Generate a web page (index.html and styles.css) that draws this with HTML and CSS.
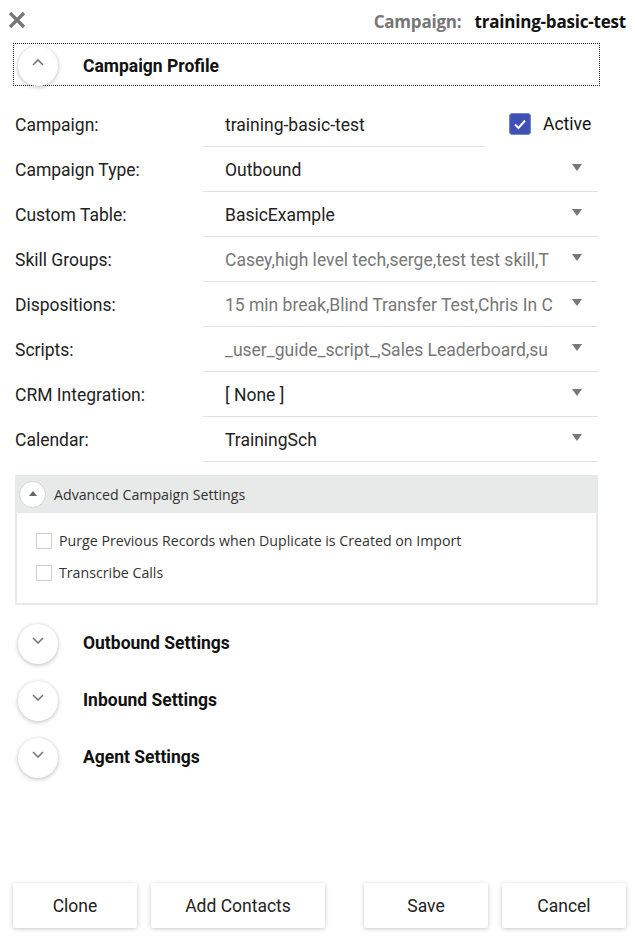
FILE: index.html
```html
<!DOCTYPE html>
<html>
<head>
<meta charset="utf-8">
<link rel="stylesheet" href="styles.css">
</head>
<body>
<div class="page">
  <div class="topbar">
    <svg class="close" width="18" height="18" viewBox="0 0 18 18"><path d="M2 2 L16 16 M16 2 L2 16" stroke="#777" stroke-width="3.2" stroke-linecap="butt"/></svg>
    <div class="camp-title"><span class="ct-label">Campaign:</span><span class="ct-value">training-basic-test</span></div>
  </div>

  <div class="section-head profile">
    <div class="circle-btn"><svg width="14" height="8" viewBox="0 0 14 8"><path d="M2 7 L7 2 L12 7" fill="none" stroke="#777" stroke-width="1.6"/></svg></div>
    <span class="section-title">Campaign Profile</span>
  </div>

  <div class="form">
    <div class="row">
      <div class="label">Campaign:</div>
      <div class="field-wrap">
        <div class="field short"><span class="val">training-basic-test</span></div>
        <label class="active"><span class="cb-on"><svg width="16" height="16" viewBox="0 0 16 16"><path d="M3 8.5 L6.5 12 L13 4.5" fill="none" stroke="#fff" stroke-width="2"/></svg></span>Active</label>
      </div>
    </div>
    <div class="row">
      <div class="label">Campaign Type:</div>
      <div class="field"><span class="val">Outbound</span><span class="caret"></span></div>
    </div>
    <div class="row">
      <div class="label">Custom Table:</div>
      <div class="field"><span class="val">BasicExample</span><span class="caret"></span></div>
    </div>
    <div class="row">
      <div class="label">Skill Groups:</div>
      <div class="field"><span class="val multi">Casey,high level tech,serge,test test skill,T</span><span class="caret"></span></div>
    </div>
    <div class="row">
      <div class="label">Dispositions:</div>
      <div class="field"><span class="val multi">15 min break,Blind Transfer Test,Chris In C</span><span class="caret"></span></div>
    </div>
    <div class="row">
      <div class="label">Scripts:</div>
      <div class="field"><span class="val multi">_user_guide_script_,Sales Leaderboard,su</span><span class="caret"></span></div>
    </div>
    <div class="row">
      <div class="label">CRM Integration:</div>
      <div class="field"><span class="val">[ None ]</span><span class="caret"></span></div>
    </div>
    <div class="row">
      <div class="label">Calendar:</div>
      <div class="field"><span class="val">TrainingSch</span><span class="caret"></span></div>
    </div>
  </div>

  <div class="advanced">
    <div class="adv-head">
      <span class="small-circle"><span class="tri-up"></span></span>
      <span>Advanced Campaign Settings</span>
    </div>
    <div class="adv-body">
      <label class="chk"><span class="box"></span>Purge Previous Records when Duplicate is Created on Import</label>
      <label class="chk"><span class="box"></span>Transcribe Calls</label>
    </div>
  </div>

  <div class="collapsed-list">
    <div class="section-head">
      <div class="circle-btn"><svg width="14" height="8" viewBox="0 0 14 8"><path d="M2 2 L7 7 L12 2" fill="none" stroke="#777" stroke-width="1.6"/></svg></div>
      <span class="section-title">Outbound Settings</span>
    </div>
    <div class="section-head">
      <div class="circle-btn"><svg width="14" height="8" viewBox="0 0 14 8"><path d="M2 2 L7 7 L12 2" fill="none" stroke="#777" stroke-width="1.6"/></svg></div>
      <span class="section-title">Inbound Settings</span>
    </div>
    <div class="section-head">
      <div class="circle-btn"><svg width="14" height="8" viewBox="0 0 14 8"><path d="M2 2 L7 7 L12 2" fill="none" stroke="#777" stroke-width="1.6"/></svg></div>
      <span class="section-title">Agent Settings</span>
    </div>
  </div>

  <div class="actions">
    <div class="left-actions">
      <button class="btn clone">Clone</button>
      <button class="btn add">Add Contacts</button>
    </div>
    <div class="right-actions">
      <button class="btn save">Save</button>
      <button class="btn cancel">Cancel</button>
    </div>
  </div>
</div>
</body>
</html>
```

FILE: styles.css
```css
* { box-sizing: border-box; }
html, body { margin: 0; padding: 0; }
body {
  font-family: Roboto, "Liberation Sans", sans-serif;
  color: #222;
  background: #fff;
}
.page {
  height: 938px;
  display: flex;
  flex-direction: column;
}
.topbar {
  display: flex;
  justify-content: space-between;
  align-items: center;
  height: 43px;
  padding: 0 9px 4px 8px;
}
.close { display: block; }
.camp-title {
  font-family: "Open Sans", "Noto Sans", sans-serif;
  font-weight: 700;
  font-size: 17px;
  letter-spacing: -0.2px;
  margin-top: 4px;
}
.ct-label { color: #777; margin-right: 13px; }
.ct-value { color: #111; }

.section-head {
  display: flex;
  align-items: center;
  height: 43px;
}
.section-head.profile {
  margin: 0 35px 0 13px;
  border: 1px dotted #222;
  padding-left: 4px;
}
.section-head.profile .section-title { margin-top: 3px; }
.circle-btn {
  width: 40px;
  height: 40px;
  border-radius: 50%;
  background: #fff;
  box-shadow: 0 1px 4px rgba(0,0,0,0.28);
  display: flex;
  align-items: center;
  justify-content: center;
  flex: none;
  margin-top: 2px;
}
.circle-btn svg { margin-top: -8px; }
.section-title {
  font-weight: 700;
  font-size: 17.5px;
  color: #111;
  margin-left: 25px;
}

.form {
  margin: 16px 37px 0 15px;
}
.row {
  display: grid;
  grid-template-columns: 188px 1fr;
  height: 45px;
  align-items: stretch;
}
.label {
  font-size: 17.5px;
  color: #222;
  display: flex;
  align-items: center;
  padding-top: 1px;
}
.field {
  border-bottom: 1px solid #e2e2e2;
  display: flex;
  align-items: center;
  padding: 1px 16px 0 22px;
  font-size: 17.5px;
  color: #222;
  min-width: 0;
}
.field-wrap {
  display: flex;
  align-items: stretch;
}
.field.short { width: 282px; flex: none; }
.val {
  flex: 1;
  white-space: nowrap;
  overflow: hidden;
  min-width: 0;
  margin-right: 16px;
}
.val.multi { color: #777; }
.field.short .val { margin-right: 0; }
.caret {
  width: 0; height: 0;
  border-left: 5px solid transparent;
  border-right: 5px solid transparent;
  border-top: 7px solid #777;
  flex: none;
  margin-top: -4px;
}
.active {
  display: flex;
  align-items: center;
  font-size: 17.5px;
  color: #111;
  margin-left: 24px;
  padding-bottom: 2px;
}
.cb-on {
  width: 22px;
  height: 22px;
  border-radius: 3px;
  background: #3f51b5;
  border: 1px solid #7986cb;
  display: flex;
  align-items: center;
  justify-content: center;
  margin-right: 12px;
}
.cb-on svg { display: block; }

.advanced {
  margin: 13px 37px 0 15px;
  border: 2px solid #e8e9e9;
  border-top: none;
  font-family: "Open Sans", "Noto Sans", sans-serif;
  font-size: 14.2px;
  color: #333;
}
.adv-head {
  background: #e8e9e9;
  height: 38px;
  display: flex;
  align-items: center;
  padding-left: 2px;
}
.small-circle {
  width: 27px;
  height: 27px;
  border-radius: 50%;
  background: #fff;
  border: 1px solid #d4d4d4;
  display: flex;
  align-items: center;
  justify-content: center;
  margin-right: 8px;
}
.tri-up {
  width: 0; height: 0;
  border-left: 4px solid transparent;
  border-right: 4px solid transparent;
  border-bottom: 5px solid #666;
  margin-top: -1px;
}
.adv-body {
  padding: 17px 0 20px 19px;
  display: flex;
  flex-direction: column;
  gap: 11px;
}
.chk {
  display: flex;
  align-items: center;
  height: 21px;
}
.box {
  width: 16px;
  height: 16px;
  border: 1px solid #cfcfcf;
  background: #fff;
  margin-right: 7px;
}

.collapsed-list {
  margin: 17px 0 0 18px;
  display: flex;
  flex-direction: column;
  gap: 15px;
}
.collapsed-list .section-head { height: 42px; }

.actions {
  margin-top: auto;
  display: flex;
  justify-content: space-between;
  padding: 0 9px 10px 13px;
}
.left-actions, .right-actions { display: flex; gap: 14px; }
.btn {
  height: 45px;
  background: #fff;
  border: none;
  border-radius: 2px;
  box-shadow: 0 1px 4px rgba(0,0,0,0.22);
  font-family: Roboto, "Liberation Sans", sans-serif;
  font-size: 17.5px;
  color: #222;
  padding: 0;
}
.clone, .save, .cancel { width: 124px; }
.add { width: 174px; }
```
